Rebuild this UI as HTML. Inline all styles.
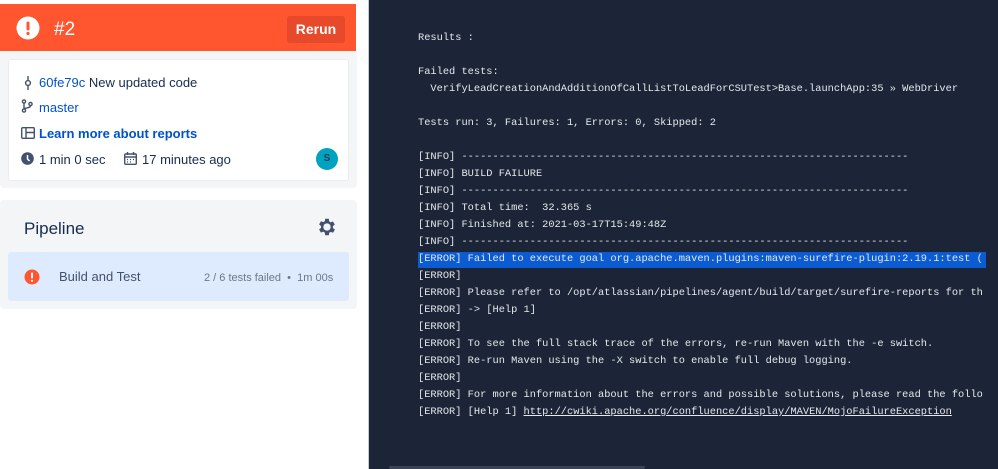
<!DOCTYPE html>
<html><head><meta charset="utf-8"><style>
*{margin:0;padding:0;box-sizing:border-box}
body{width:998px;height:469px;overflow:hidden;background:#fff;font-family:"Liberation Sans",sans-serif;position:relative}
.abs{position:absolute}
.hdr{left:0;top:4px;width:356px;height:47px;background:#ff5630;color:#fff}
.sum{left:0;top:51px;width:357px;height:137px;background:#f4f5f7;border-radius:0 0 4px 4px}
.card{left:8px;top:59px;width:341px;height:122px;background:#fff;border-radius:3px;border:1px solid #ebecf0}
.t{font-size:13px;color:#172b4d;white-space:nowrap}
.lnk{color:#0052cc}
.pipe{left:0;top:200px;width:357px;height:109px;background:#f4f5f7;border-radius:4px}
.row{left:8px;top:252px;width:341px;height:49px;background:#deebff;border-radius:3px}
.term{left:368px;top:0;width:630px;height:469px;background:#1b2537;border-left:1px solid #c8cacd}
.mono{font-family:"Liberation Mono",monospace;font-size:10.35px;color:#e6e8ec;white-space:pre;position:absolute;left:49px;line-height:17px}
</style></head><body>
<div class="abs hdr">
 <svg class="abs" style="left:16px;top:12px" width="24" height="24"><circle cx="12" cy="12" r="11.5" fill="#fff"/><rect x="10.5" y="5.5" width="3" height="9" rx="1.5" fill="#ff5630"/><circle cx="12" cy="17.5" r="1.6" fill="#ff5630"/></svg>
 <div class="abs" style="left:54px;top:15px;font-size:19px">#2</div>
 <div class="abs" style="left:287px;top:12px;width:58px;height:27px;background:#e64a2b;border-radius:3px;font-size:14px;font-weight:bold;text-align:center;line-height:27px">Rerun</div>
</div>
<div class="abs sum"></div>
<div class="abs card"></div>
<svg class="abs" style="left:24px;top:76px" width="8" height="14"><line x1="4" y1="0" x2="4" y2="14" stroke="#42526e" stroke-width="1.4"/><circle cx="4" cy="7" r="2.4" fill="#fff" stroke="#42526e" stroke-width="1.4"/></svg>
<div class="abs t" style="left:39px;top:75px"><span class="lnk">60fe79c</span> New updated code</div>
<svg class="abs" style="left:21px;top:99px" width="12" height="14" fill="none" stroke="#42526e" stroke-width="1.4"><circle cx="3" cy="2.5" r="1.6"/><circle cx="3" cy="11.5" r="1.6"/><circle cx="9.5" cy="5" r="1.6"/><path d="M3 4v6M9.5 6.6c0 3-6.5 2-6.5 3.5"/></svg>
<div class="abs t lnk" style="left:39px;top:100px">master</div>
<svg class="abs" style="left:21px;top:127px" width="14" height="12" fill="none" stroke="#42526e" stroke-width="1.4"><rect x="0.7" y="0.7" width="12.6" height="10.6" rx="1"/><path d="M5 1v10M5 5.5h8"/></svg>
<div class="abs t lnk" style="left:39px;top:126px;font-weight:bold">Learn more about reports</div>
<svg class="abs" style="left:21px;top:152px" width="13" height="13"><circle cx="6.5" cy="6.5" r="6.3" fill="#42526e"/><path d="M6.5 3v4l2 2" stroke="#fff" stroke-width="1.5" fill="none"/></svg>
<div class="abs t" style="left:39px;top:152px">1 min 0 sec</div>
<svg class="abs" style="left:124px;top:152px" width="13" height="13" fill="none" stroke="#42526e" stroke-width="1.4"><rect x="0.7" y="2" width="11.6" height="10.3" rx="1"/><path d="M1 5h11M3.5 0v3M9.5 0v3"/><path d="M3 7.5h1M6 7.5h1M9 7.5h1M3 10h1M6 10h1" stroke-width="1.2"/></svg>
<div class="abs t" style="left:142px;top:152px">17 minutes ago</div>
<div class="abs" style="left:316px;top:148px;width:22px;height:22px;border-radius:50%;background:#00a3bf;color:#253858;font-size:10px;font-weight:bold;text-align:center;line-height:22px">S</div>
<div class="abs pipe"></div>
<div class="abs" style="left:24px;top:219px;font-size:17px;color:#172b4d">Pipeline</div>
<svg class="abs" style="left:316px;top:216px" width="22" height="22" viewBox="0 0 24 24"><path fill="#42526e" d="M19.4 13a7.5 7.5 0 000-2l2.1-1.6-2-3.5-2.5 1a7 7 0 00-1.7-1L15 3h-4l-.4 2.7a7 7 0 00-1.7 1l-2.5-1-2 3.5L6.5 11a7.5 7.5 0 000 2l-2.1 1.6 2 3.5 2.5-1a7 7 0 001.7 1L11 21h4l.4-2.7a7 7 0 001.7-1l2.5 1 2-3.5zM13 16a4 4 0 110-8 4 4 0 010 8z" transform="translate(-1 0)"/></svg>
<div class="abs row"></div>
<svg class="abs" style="left:24px;top:269px" width="16" height="16"><circle cx="8" cy="8" r="7.5" fill="#ff5630"/><rect x="7" y="3.5" width="2" height="6" rx="1" fill="#fff"/><circle cx="8" cy="11.8" r="1.1" fill="#fff"/></svg>
<div class="abs" style="left:59px;top:269px;font-size:13px;color:#42526e">Build and Test</div>
<div class="abs" style="left:204px;top:272px;font-size:11px;color:#6b778c;white-space:nowrap">2 / 6 tests failed&nbsp; •&nbsp; 1m 00s</div>
<div class="abs term">
<div class="abs" style="left:49px;top:252px;width:568px;height:16px;background:#0b5bd3"></div>
<div class="mono" style="top:30px">Results :

Failed tests:
  VerifyLeadCreationAndAdditionOfCallListToLeadForCSUTest&gt;Base.launchApp:35 » WebDriver

Tests run: 3, Failures: 1, Errors: 0, Skipped: 2

[INFO] ------------------------------------------------------------------------
[INFO] BUILD FAILURE
[INFO] ------------------------------------------------------------------------
[INFO] Total time:  32.365 s
[INFO] Finished at: 2021-03-17T15:49:48Z
[INFO] ------------------------------------------------------------------------
[ERROR] Failed to execute goal org.apache.maven.plugins:maven-surefire-plugin:2.19.1:test (
[ERROR]
[ERROR] Please refer to /opt/atlassian/pipelines/agent/build/target/surefire-reports for th
[ERROR] -&gt; [Help 1]
[ERROR]
[ERROR] To see the full stack trace of the errors, re-run Maven with the -e switch.
[ERROR] Re-run Maven using the -X switch to enable full debug logging.
[ERROR]
[ERROR] For more information about the errors and possible solutions, please read the follo
[ERROR] [Help 1] <u>http://cwiki.apache.org/confluence/display/MAVEN/MojoFailureException</u></div>
<div class="abs" style="left:617px;top:0;width:13px;height:469px;background:#1b2537"></div>
<div class="abs" style="left:20px;top:466px;width:256px;height:3px;background:#3a4456;border-radius:2px"></div>
</div>
</body></html>
